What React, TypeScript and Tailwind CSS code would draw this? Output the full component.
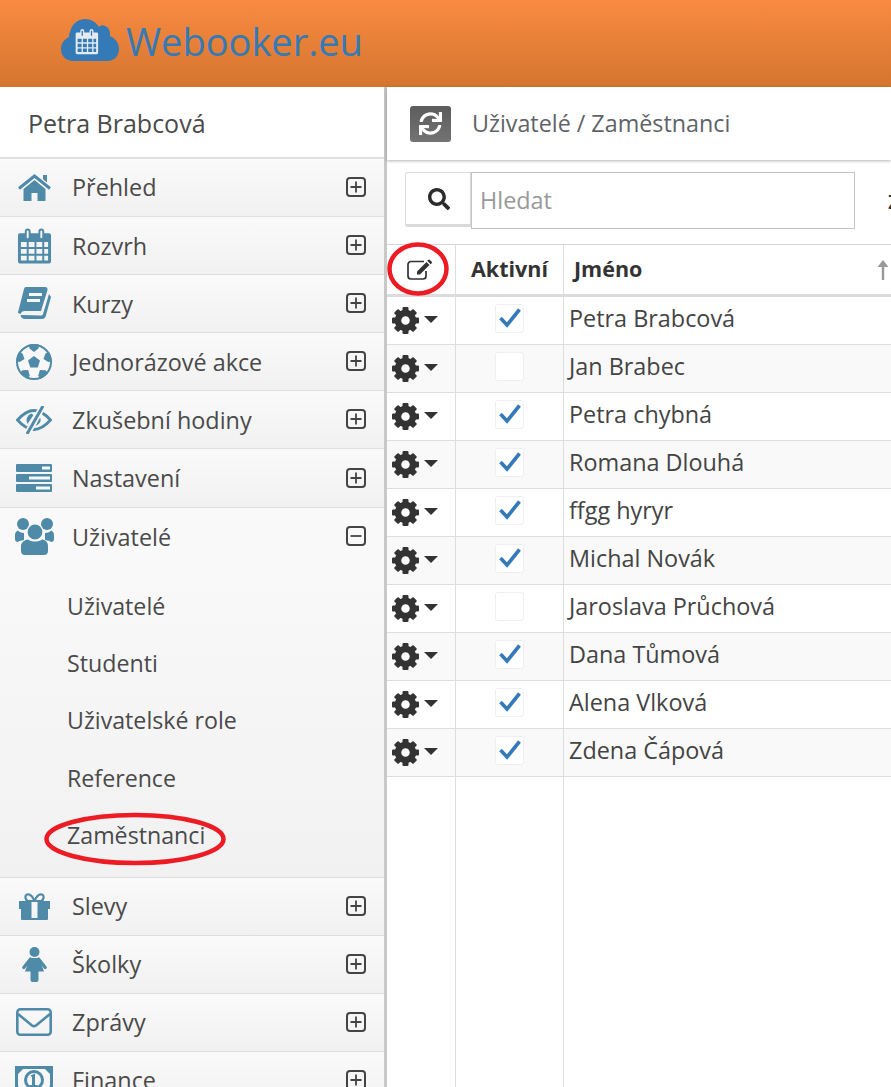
import React from 'react';
import { FaSync, FaSearch } from 'react-icons/fa';

const font = { fontFamily: '"Open Sans", sans-serif' };
const WHITE = '#f7f7f7';

const CalendarGrid: React.FC<{ className?: string }> = ({ className }) => (
    <svg viewBox="0 0 36 36" className={className} fill="currentColor">
        <path fillRule="evenodd" d="M3 5h5V3a3 3 0 0 1 6 0v2h8V3a3 3 0 0 1 6 0v2h5a2 2 0 0 1 2 2v27a2 2 0 0 1-2 2H3a2 2 0 0 1-2-2V7a2 2 0 0 1 2-2zM10 3v6a1 1 0 0 0 2 0V3a1 1 0 0 0-2 0zm14 0v6a1 1 0 0 0 2 0V3a1 1 0 0 0-2 0zM4 14v5h6v-5zm8 0v5h6v-5zm8 0v5h6v-5zm8 0v5h4v-5zM4 21v5h6v-5zm8 0v5h6v-5zm8 0v5h6v-5zm8 0v5h4v-5zM4 28v5h6v-5zm8 0v5h6v-5zm8 0v5h6v-5zm8 0v5h4v-5z" />
    </svg>
);

const Logo = () => (
    <svg viewBox="0 0 58 44" className="w-[58px] h-[44px]">
        <path fill="#337ab7" d="M12 43C5 43 0 38 0 31c0-6 4-10 8-12 0-2 0-3 1-5C11 6 17 1 24 1c6 0 11 3 14 8 2-2 4-2 6-1 3 1 5 4 5 8v2c5 2 9 7 9 13 0 7-5 12-11 12z" />
        <g transform="translate(14 11) scale(0.66 0.7)" fill="#e4eaf0">
            <path fillRule="evenodd" d="M3 5h5V3a3 3 0 0 1 6 0v2h8V3a3 3 0 0 1 6 0v2h5a2 2 0 0 1 2 2v27a2 2 0 0 1-2 2H3a2 2 0 0 1-2-2V7a2 2 0 0 1 2-2zM10 3v6a1 1 0 0 0 2 0V3a1 1 0 0 0-2 0zm14 0v6a1 1 0 0 0 2 0V3a1 1 0 0 0-2 0zM4 14v5h6v-5zm8 0v5h6v-5zm8 0v5h6v-5zm8 0v5h4v-5zM4 21v5h6v-5zm8 0v5h6v-5zm8 0v5h6v-5zm8 0v5h4v-5zM4 28v5h6v-5zm8 0v5h6v-5zm8 0v5h6v-5zm8 0v5h4v-5z" />
        </g>
    </svg>
);

const HomeIcon = () => (
    <svg viewBox="0 0 33 27" className="w-[33px] h-[27px]" fill="currentColor">
        <path d="M25 1h4v7.5l-4-3.2z" />
        <path d="M1 14.5 16.5 2 32 14.5" fill="none" stroke="currentColor" strokeWidth="3" />
        <path d="M5.5 15 16.5 6l11 9v12h-8v-8h-6v8h-8z" />
    </svg>
);

const BookIcon = () => (
    <svg viewBox="0 0 33 33" className="w-[33px] h-[33px]" fill="currentColor">
        <path d="M8 0h19c2 0 3 1.500 2.400 3.500L23 24H7c-2.500 0-4 1-4.200 3L0 26c0-1 .5-3 1-4.500L6 2c.3-1.200 1-2 2-2z" />
        <path d="M11 7.500h13M9 13.500h13" stroke={WHITE} strokeWidth="2.800" fill="none" />
        <path d="M2.500 28c.5 2.500 2 4 4.500 4h17c2 0 3.200-1 3.800-3L33 10l-2-3-6 20c-.4 1-1 1.500-2 1.500z" />
    </svg>
);

const patch = 'M13 0h10l-.5 4.500L18 8l-4.500-3.500z';
const BallIcon = () => (
    <svg viewBox="0 0 36 36" className="w-[36px] h-[36px]" fill="currentColor">
        <defs>
            <clipPath id="ball"><circle cx="18" cy="18" r="18" /></clipPath>
        </defs>
        <circle cx="18" cy="18" r="17" fill={WHITE} stroke="currentColor" strokeWidth="2" />
        <path d="M18 12l6 4.400-2.300 7h-7.400l-2.300-7z" />
        <g clipPath="url(#ball)">
            {[0, 72, 144, 216, 288].map((a) => (
                <path key={a} d={patch} transform={`rotate(${a} 18 18)`} />
            ))}
        </g>
    </svg>
);

const EyeSlashIcon = () => (
    <svg viewBox="0 0 36 28" className="w-[36px] h-[28px]" fill="currentColor">
        <path d="M1.500 14Q10 4.500 18 4.500T34.500 14Q26 23.500 18 23.500T1.500 14z" fill="none" stroke="currentColor" strokeWidth="2.800" />
        <path d="M15 7.500Q8.500 11 11.500 18l6-9z" />
        <path d="M24 11q2.500 6-4.500 9l3-7z" />
        <path d="M27 0 11 28" stroke={WHITE} strokeWidth="6.500" />
        <path d="M27 0 11 28" stroke="currentColor" strokeWidth="3" />
    </svg>
);

const ServerIcon = () => (
    <svg viewBox="0 0 36 28" className="w-[36px] h-[28px]">
        {[0, 10, 20].map((y) => <rect key={y} y={y} width="36" height="8" rx="1" fill="currentColor" />)}
        <rect x="26" y="2.500" width="8" height="3" fill={WHITE} />
        <rect x="13" y="12.500" width="21" height="3" fill={WHITE} />
        <rect x="20" y="22.500" width="14" height="3" fill={WHITE} />
    </svg>
);

const UsersIcon = () => (
    <svg viewBox="0 0 39 37" className="w-[39px] h-[37px]" fill="currentColor">
        <circle cx="8" cy="6" r="6" />
        <circle cx="32" cy="6" r="6" />
        <path d="M3 12.500c1 1.500 3 2.500 6 2.500v7c-3 .5-5 1-6 2-2 0-3-1-3-3v-4c0-2 1-4 3-4.500z" />
        <path d="M36 12.500c-1 1.500-3 2.500-6 2.500v7c3 .5 5 1 6 2 2 0 3-1 3-3v-4c0-2-1-4-3-4.500z" />
        <circle cx="20" cy="14" r="8" stroke="#fafafa" strokeWidth="1.200" />
        <path d="M13 21.500c2 1.500 4.500 2 7 2s5-.5 7-2c4 .5 6 3 6 7V33c0 2.500-1.500 4-4 4H10c-2.500 0-4-1.500-4-4v-4.500c0-4 3-6.500 7-7z" />
    </svg>
);

const GiftIcon = () => (
    <svg viewBox="0 0 31 27" className="w-[31px] h-[27px]" fill="currentColor">
        <path d="M15.500 8C13 2 10 1 8 1.500 5.500 2.500 6 7 9 8zM15.500 8c2.500-6 5.500-7 7.500-6.500C25.500 2.500 25 7 22 8z" fill="none" stroke="currentColor" strokeWidth="2.200" />
        <path fillRule="evenodd" d="M0 8h31v8h-2v10a1 1 0 0 1-1 1H3a1 1 0 0 1-1-1V16H0zm12.500 1v16h6V9z" />
    </svg>
);

const FemaleIcon = () => (
    <svg viewBox="0 0 25 35" className="w-[25px] h-[35px]" fill="currentColor">
        <circle cx="12.500" cy="5" r="5" />
        <path d="M8.500 12 1.800 20.500M16.500 12l6.700 8.500" stroke="currentColor" strokeWidth="3.200" strokeLinecap="round" />
        <path d="M8 11h9l5 13.500h-5.500V33a2 2 0 0 1-2 2h-4a2 2 0 0 1-2-2v-8.500H3z" />
    </svg>
);

const EnvelopeIcon = () => (
    <svg viewBox="0 0 36 28" className="w-[36px] h-[28px]" fill="none" stroke="currentColor" strokeWidth="2.600">
        <rect x="1.300" y="1.300" width="33.400" height="25.400" rx="3" />
        <path d="M2 6l14 11.500a3.500 3.500 0 0 0 4 0L34 6" />
    </svg>
);

const BillIcon = () => (
    <svg viewBox="0 0 38 28" className="w-[38px] h-[28px]" fill="currentColor">
        <rect x="1.500" y="1.500" width="35" height="25" fill={WHITE} stroke="currentColor" strokeWidth="3" />
        <path d="M2 2h7L2 9zM36 2h-7L36 9zM2 26h7L2 19zM36 26h-7L36 19z" />
        <circle cx="19" cy="14" r="8.500" fill="none" stroke="currentColor" strokeWidth="3" />
        <path d="M15.500 9.500l4.500-2V19h2.500v2.500h-7.500V19H17v-8z" />
    </svg>
);

const SquareIcon: React.FC<{ open?: boolean }> = ({ open }) => (
    <svg viewBox="0 0 20 20" className="w-[20px] h-[20px] mr-[18px] mb-[1px] text-[#444]" fill="none" stroke="currentColor">
        <rect x="1" y="1" width="18" height="18" rx="3" strokeWidth="2" />
        <path d={open ? 'M4.500 10h11' : 'M4.500 10h11M10 4.500v11'} strokeWidth="1.800" />
    </svg>
);

const EditIcon = () => (
    <svg viewBox="0 0 26 21" className="w-[26px] h-[21px] text-[#333] ml-[-3px]" fill="none" stroke="currentColor">
        <path d="M17 2.500H4a3 3 0 0 0-3 3V17a3 3 0 0 0 3 3h12a3 3 0 0 0 3-3v-5" strokeWidth="1.700" />
        <path d="M10 12.500 19.500 3l3 3L13 15.500h-3z" fill="currentColor" stroke="none" />
        <path d="M21 1a1.400 1.400 0 0 1 2 0l1.500 1.500a1.400 1.400 0 0 1 0 2l-.8.8-3.500-3.500z" fill="currentColor" stroke="none" />
    </svg>
);

const GearIcon = () => (
    <svg viewBox="0 0 27 27" className="w-[27px] h-[27px]" fill="currentColor">
        <circle cx="13.500" cy="13.500" r="7.500" fill="none" stroke="currentColor" strokeWidth="6.500" />
        {[0, 45, 90, 135, 180, 225, 270, 315].map((a) => (
            <rect key={a} x="10.500" y="0" width="6" height="6" rx="1" transform={`rotate(${a} 13.500 13.500)`} />
        ))}
    </svg>
);

const CheckMark = () => (
    <svg viewBox="0 0 22 20" className="w-[22px] h-[20px]" fill="none" stroke="#337ab7" strokeWidth="3.600">
        <path d="M1.500 10 8 17 20.500 1.500" />
    </svg>
);

const Caret = () => (
    <svg viewBox="0 0 14 7" className="w-[14px] h-[7px] ml-[5px] mb-[1px]" fill="currentColor">
        <path d="M0 0h14L7 7z" />
    </svg>
);

const ArrowUp = () => (
    <svg viewBox="0 0 12 20" className="w-[12px] h-[20px] mr-[2px] text-[#999]" fill="currentColor">
        <path d="M6 0l5.500 7H7.200v13H4.800V7H.5z" />
    </svg>
);

const menu = [
    { label: 'Přehled', icon: <HomeIcon /> },
    { label: 'Rozvrh', icon: <CalendarGrid className="w-[35px] h-[36px]" /> },
    { label: 'Kurzy', icon: <BookIcon /> },
    { label: 'Jednorázové akce', icon: <BallIcon /> },
    { label: 'Zkušební hodiny', icon: <EyeSlashIcon /> },
    { label: 'Nastavení', icon: <ServerIcon /> },
];

const menuBottom = [
    { label: 'Slevy', icon: <GiftIcon /> },
    { label: 'Školky', icon: <FemaleIcon /> },
    { label: 'Zprávy', icon: <EnvelopeIcon /> },
    { label: 'Finance', icon: <BillIcon /> },
];

const subMenu = ['Uživatelé', 'Studenti', 'Uživatelské role', 'Reference', 'Zaměstnanci'];

const users = [
    { name: 'Petra Brabcová', active: true },
    { name: 'Jan Brabec', active: false },
    { name: 'Petra chybná', active: true },
    { name: 'Romana Dlouhá', active: true },
    { name: 'ffgg hyryr', active: true },
    { name: 'Michal Novák', active: true },
    { name: 'Jaroslava Průchová', active: false },
    { name: 'Dana Tůmová', active: true },
    { name: 'Alena Vlková', active: true },
    { name: 'Zdena Čápová', active: true },
];

const MenuRow: React.FC<{ label: string; icon: React.ReactNode; open?: boolean }> = ({ label, icon, open }) => (
    <div className={`flex items-center h-[58.1px] shrink-0 ${open ? 'bg-[#f9f9f9]' : 'border-b border-[#dedede] bg-gradient-to-b from-[#fafafa] to-[#f1f1f1]'}`}>
        <div className="w-[68px] shrink-0 flex justify-center text-[#4f8aa8]">{icon}</div>
        <span className="flex-1 pl-[4px] pt-[1px] text-[23.4px] text-[#4a4a4a]">{label}</span>
        <SquareIcon open={open} />
    </div>
);

export default function App() {
    return (
        <div style={font} className="w-[891px] h-[1087px] overflow-hidden flex flex-col bg-white">
            {/* Header */}
            <div className="h-[87px] shrink-0 flex items-start pl-[61px] pt-[18px] bg-gradient-to-b from-[#f98b41] to-[#d4752f]">
                <Logo />
                <span className="ml-[7px] -mt-[1px] text-[38px] leading-[48px] text-[#337ab7]">Webooker.eu</span>
            </div>

            <div className="flex flex-1 min-h-0">
                {/* Sidebar */}
                <div className="w-[387px] shrink-0 border-r-[3px] border-[#c8c8c8] flex flex-col overflow-hidden">
                    <div className="h-[72px] shrink-0 flex items-center pl-[28px] pt-[4px] text-[25px] text-[#4a4a4a] border-b-2 border-[#dedede]">
                        Petra Brabcová
                    </div>
                    {menu.map((m) => <MenuRow key={m.label} {...m} />)}
                    <MenuRow label="Uživatelé" open icon={<UsersIcon />} />
                    <div className="relative h-[312px] shrink-0 pt-[12px] bg-gradient-to-b from-[#f9f9f9] to-[#f1f1f1] border-b border-[#dedede] flex flex-col">
                        {subMenu.map((s) => (
                            <div key={s} className="h-[57.25px] shrink-0 flex items-center pl-[67px] text-[23.2px] text-[#4a4a4a]">{s}</div>
                        ))}
                        <svg className="absolute left-[44px] top-[246px] w-[182px] h-[54px]" viewBox="0 0 182 54">
                            <ellipse cx="91" cy="27" rx="88.500" ry="24" fill="none" stroke="#ed1c24" strokeWidth="4.500" />
                        </svg>
                    </div>
                    {menuBottom.map((m) => <MenuRow key={m.label} {...m} />)}
                </div>

                {/* Main */}
                <div className="flex-1 min-w-0 flex flex-col">
                    <div className="h-[73px] shrink-0 flex items-center pl-[23px] bg-white shadow-[0_1px_3px_rgba(0,0,0,0.3)]">
                        <div className="w-[41px] h-[36px] rounded-[3px] bg-gradient-to-b from-[#5c5c5c] to-[#737373] flex items-center justify-center">
                            <FaSync className="w-[23px] h-[23px] text-white" />
                        </div>
                        <span className="ml-[21px] text-[23.3px] text-[#5f6368]">Uživatelé / Zaměstnanci</span>
                    </div>

                    <div className="flex h-[84px] shrink-0 pt-[12px] pl-[18px] relative">
                        <div className="w-[66px] h-[55px] shrink-0 border border-[#dadada] border-b-[3px] rounded-l-[3px] flex items-center justify-center">
                            <FaSearch className="w-[22px] h-[22px] text-[#2b2b2b] ml-[1px]" />
                        </div>
                        <div className="w-[384px] h-[57px] shrink-0 border border-[#c4c4c4] flex items-center pl-[8px] text-[23.4px] text-[#999999]">Hledat</div>
                        <span className="ml-[33px] mt-[15px] text-[#333] text-[20px] font-semibold">Z</span>
                    </div>

                    {/* Table */}
                    <div className="flex-1 min-h-0 flex flex-col border-t border-[#d4d4d4]">
                        <div className="grid grid-cols-[69px_108px_1fr] h-[52px] shrink-0 border-b-[3px] border-[#dcdcdc]">
                            <div className="relative border-r border-[#dedede] flex items-center justify-center">
                                <EditIcon />
                                <svg className="absolute left-[0px] top-[-3px] w-[62px] h-[54px]" viewBox="0 0 62 54">
                                    <ellipse cx="31" cy="27" rx="28.500" ry="24.500" fill="none" stroke="#ed1c24" strokeWidth="4.500" />
                                </svg>
                            </div>
                            <div className="border-r border-[#dedede] flex items-center justify-center text-[21.5px] font-bold text-[#333]">Aktivní</div>
                            <div className="flex items-center justify-between pl-[10px] text-[21.5px] font-bold text-[#333]">
                                <span>Jméno</span>
                                <ArrowUp />
                            </div>
                        </div>
                        {users.map((u, i) => (
                            <div key={u.name} className={`grid grid-cols-[69px_108px_1fr] h-[48px] shrink-0 border-b border-[#dedede] ${i % 2 ? 'bg-[#f9f9f9]' : 'bg-white'}`}>
                                <div className="border-r border-[#dedede] flex items-center pl-[5px] pb-[1px] text-[#333]">
                                    <GearIcon />
                                    <Caret />
                                </div>
                                <div className="border-r border-[#dedede] flex items-center justify-center">
                                    <div className="w-[29px] h-[29px] bg-white border border-[#efefef] rounded-[3px] flex items-center justify-center mb-[5px]">
                                        {u.active && <CheckMark />}
                                    </div>
                                </div>
                                <div className="flex items-center pl-[5px] pb-[3px] text-[23.4px] text-[#444]">{u.name}</div>
                            </div>
                        ))}
                        <div className="grid grid-cols-[69px_108px_1fr] flex-1">
                            <div className="border-r border-[#dedede]" />
                            <div className="border-r border-[#dedede]" />
                            <div />
                        </div>
                    </div>
                </div>
            </div>
        </div>
    );
}
